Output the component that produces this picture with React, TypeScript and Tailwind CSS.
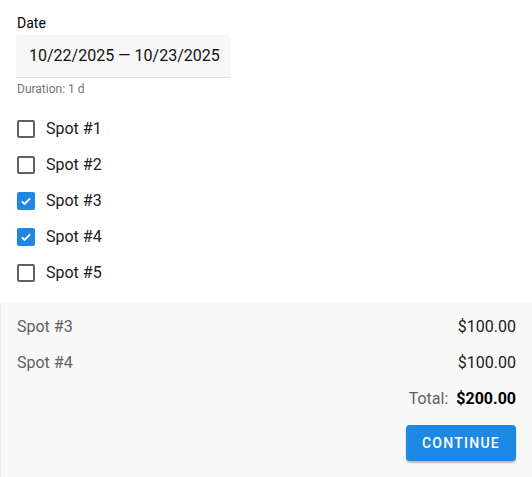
import { useState } from 'react';

const spots = ['Spot #1', 'Spot #2', 'Spot #3', 'Spot #4', 'Spot #5'];
const PRICE = 100;

export default function App() {
  const [selected, setSelected] = useState<Set<string>>(new Set(['Spot #3', 'Spot #4']));

  const toggle = (s: string) => {
    const next = new Set(selected);
    if (next.has(s)) next.delete(s);
    else next.add(s);
    setSelected(next);
  };

  const chosen = spots.filter((s) => selected.has(s));

  return (
    <div className="w-[532px] h-[477px] bg-white flex flex-col text-[#212121]" style={{ fontFamily: 'Roboto, "Noto Sans", sans-serif' }}>
      <div className="px-4 pt-[15px]">
        <div className="pl-[1px] text-sm leading-4 text-black">Date</div>
        <div className="mt-[4px] w-[215px] h-[43px] bg-[#f7f7f7] rounded-t border-b border-[#dedede] flex items-center pl-[13px] text-base text-[#111]">
          10/22/2025 — 10/23/2025
        </div>
        <div className="mt-[3px] pl-[1px] text-xs leading-4 text-[#757575]">Duration: 1 d</div>

        {/* Spot list */}
        <div className="mt-[14px] flex flex-col">
          {spots.map((s) => {
            const on = selected.has(s);
            return (
              <label key={s} onClick={() => toggle(s)} className="h-9 flex items-center gap-[11px] pl-[1px] cursor-pointer">
                {on ? (
                  <span className="w-[18px] h-[18px] rounded-[2px] bg-[#1e88e5] flex items-center justify-center">
                    <svg viewBox="0 0 24 24" className="w-[14px] h-[14px]" fill="none" stroke="white" strokeWidth={3.2}>
                      <path d="M5 12.5l4.5 4.5L19 7.5" />
                    </svg>
                  </span>
                ) : (
                  <span className="w-[18px] h-[18px] rounded-[2px] border-2 border-[#616161] bg-white" />
                )}
                <span className="text-base text-[#212121]">{s}</span>
              </label>
            );
          })}
        </div>
      </div>

      {/* Summary */}
      <div className="mt-[11px] flex-1 bg-[#f8f8f8] border-l border-[#ececec] pl-4 pr-4 pt-[7px]">
        {chosen.map((s) => (
          <div key={s} className="h-9 flex items-center justify-between text-base">
            <span className="text-[#616161]">{s}</span>
            <span className="text-[#1a1a1a]">${PRICE.toFixed(2)}</span>
          </div>
        ))}
        <div className="h-9 flex items-center justify-end gap-2 text-base">
          <span className="text-[#616161]">Total:</span>
          <span className="font-bold text-black">${(chosen.length * PRICE).toFixed(2)}</span>
        </div>
        <div className="mt-[8px] flex justify-end">
          <button className="h-9 w-[110px] rounded bg-[#1e88e5] text-white text-sm font-medium tracking-[1.25px] uppercase shadow-[0_2px_2px_rgba(0,0,0,0.25)]">
            Continue
          </button>
        </div>
      </div>
    </div>
  );
}
